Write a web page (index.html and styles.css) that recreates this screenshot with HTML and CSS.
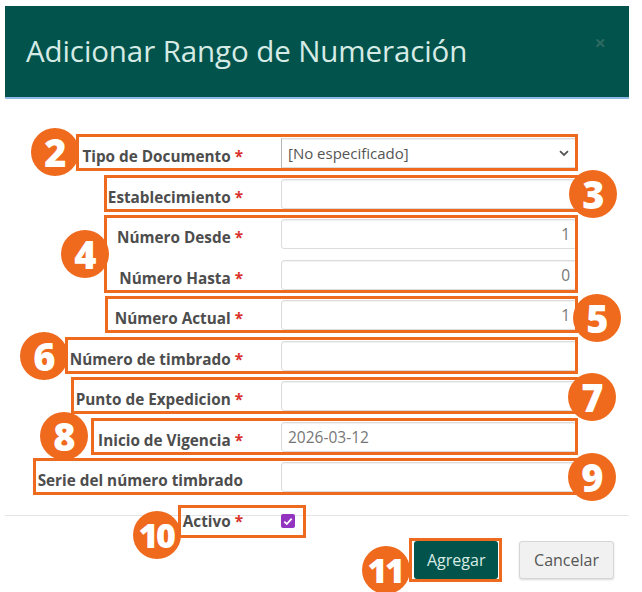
FILE: index.html
```html
<!DOCTYPE html>
<html lang="es">
<head>
<meta charset="utf-8">
<title>Adicionar Rango de Numeración</title>
<link rel="stylesheet" href="styles.css">
</head>
<body>
<div class="modal">
  <div class="modal-header">
    <h4 class="modal-title">Adicionar Rango de Numeración</h4>
    <span class="close">×</span>
  </div>
  <div class="modal-body">
    <div class="row">
      <label class="lbl">Tipo de Documento <span class="req">*</span></label>
      <div class="field select">[No especificado]
        <svg class="chev" width="10" height="7" viewBox="0 0 10 7"><path d="M1 1.2 L5 5 L9 1.2" fill="none" stroke="#555" stroke-width="1.8"/></svg>
      </div>
      <span class="mark m2"></span>
      <span class="badge b2">2</span>
    </div>
    <div class="row">
      <label class="lbl">Establecimiento <span class="req">*</span></label>
      <div class="field"></div>
      <span class="mark m3"></span>
      <span class="badge b3">3</span>
    </div>
    <div class="group">
      <div class="row">
        <label class="lbl">Número Desde <span class="req">*</span></label>
        <div class="field num">1</div>
      </div>
      <div class="row">
        <label class="lbl">Número Hasta <span class="req">*</span></label>
        <div class="field num">0</div>
      </div>
      <span class="mark m4"></span>
      <span class="badge b4">4</span>
    </div>
    <div class="row">
      <label class="lbl">Número Actual <span class="req">*</span></label>
      <div class="field num">1</div>
      <span class="mark m5"></span>
      <span class="badge b5">5</span>
    </div>
    <div class="row">
      <label class="lbl">Número de timbrado <span class="req">*</span></label>
      <div class="field"></div>
      <span class="mark m6"></span>
      <span class="badge b6">6</span>
    </div>
    <div class="row">
      <label class="lbl">Punto de Expedicion <span class="req">*</span></label>
      <div class="field"></div>
      <span class="mark m7"></span>
      <span class="badge b7">7</span>
    </div>
    <div class="row">
      <label class="lbl">Inicio de Vigencia <span class="req">*</span></label>
      <div class="field date">2026-03-12</div>
      <span class="mark m8"></span>
      <span class="badge b8">8</span>
    </div>
    <div class="row">
      <label class="lbl">Serie del número timbrado</label>
      <div class="field"></div>
      <span class="mark m9"></span>
      <span class="badge b9">9</span>
    </div>
  </div>
  <div class="modal-footer">
    <div class="row check-row">
      <label class="lbl">Activo <span class="req">*</span></label>
      <div class="check-cell">
        <span class="checkbox">
          <svg width="10" height="9" viewBox="0 0 10 9"><path d="M1.3 4.6 L3.8 7 L8.7 1.6" fill="none" stroke="#fff" stroke-width="1.8"/></svg>
        </span>
      </div>
      <span class="mark m10"></span>
      <span class="badge b10 wide">10</span>
    </div>
    <div class="buttons">
      <div class="btn-wrap">
        <button class="btn btn-primary">Agregar</button>
        <span class="mark m11"></span>
        <span class="badge b11 wide">11</span>
      </div>
      <button class="btn btn-default">Cancelar</button>
    </div>
  </div>
</div>
</body>
</html>
```
FILE: styles.css
```css
* { box-sizing: border-box; }
html, body { margin: 0; padding: 0; background: #fff; }
body {
  font-family: "Open Sans", "Noto Sans", sans-serif;
  color: #555;
  width: 642px;
  height: 592px;
  overflow: hidden;
}
.modal {
  margin: 6px 0 0 5px;
  width: 624px;
}
.modal-header {
  height: 93px;
  background: #02534b;
  border-bottom: 2px solid #8dbbe6;
  display: flex;
  align-items: center;
  justify-content: space-between;
  padding: 0 23px 0 21px;
}
.modal-title {
  margin: 0;
  font-size: 29.5px;
  font-weight: 400;
  color: #d6ebe5;
  line-height: 1.1;
  letter-spacing: -0.1px;
}
.close {
  font-size: 20px;
  font-weight: 700;
  color: #2c6961;
  line-height: 1;
  margin-top: -18px;
}
.modal-body {
  padding: 39px 0 23px 0;
  display: flex;
  flex-direction: column;
  row-gap: 10.5px;
}
.group {
  position: relative;
  width: 572px;
  display: flex;
  flex-direction: column;
  row-gap: 10.5px;
}
.row {
  position: relative;
  width: 572px;
  display: grid;
  grid-template-columns: 238px 296px;
  column-gap: 38px;
  align-items: center;
  height: 30px;
}
.lbl {
  text-align: right;
  font-weight: 700;
  font-size: 15.3px;
  color: #4d4d4d;
  padding-top: 6px;
  white-space: nowrap;
}
.req { color: #d9302c; }
.field {
  height: 30px;
  border: 1px solid #dcdcdc;
  border-radius: 3px;
  box-shadow: inset 0 1px 1px rgba(0,0,0,.06);
  background: #fff;
  font-size: 15.5px;
  line-height: 28px;
  padding: 0 6px;
  color: #555;
}
.select {
  position: relative;
  border-left-color: #b5b5b5;
  border-radius: 0;
  font-size: 15px;
}
.chev { position: absolute; right: 7px; top: 11px; }
.num { text-align: right; color: #777; }
.date { color: #777; }

.mark {
  position: absolute;
  top: -4px;
  bottom: -3px;
  right: -1px;
  border: 3px solid #ed6a1f;
  pointer-events: none;
}
.m2 { left: 71px; }
.m3 { left: 99px; }
.m4 { left: 99px; }
.m5 { left: 100px; }
.m6 { left: 60px; }
.m7 { left: 66px; }
.m8 { left: 86px; }
.m9 { left: 28px; }

.badge {
  position: absolute;
  width: 48px;
  height: 48px;
  margin: -24px 0 0 -24px;
  border-radius: 50%;
  background: #ef6a1d;
  color: #fff;
  font-weight: 800;
  font-size: 38px;
  line-height: 48px;
  text-align: center;
  z-index: 2;
  letter-spacing: -1px;
}
.badge.wide {
  font-size: 34px;
  letter-spacing: -2.5px;
  text-indent: -2px;
}
.b2 { left: 50px; top: 14px; }
.b3 { left: 588px; top: 15.5px; }
.b4 { left: 80px; top: 35px; }
.b5 { left: 592px; top: 18px; }
.b6 { left: 39px; top: 15.5px; }
.b7 { left: 587px; top: 16px; }
.b8 { left: 59px; top: 14.5px; }
.b9 { left: 587px; top: 15px; }

.modal-footer {
  border-top: 1px solid #e5e5e5;
}
.check-row {
  height: 18px;
  margin-top: -4px;
}
.check-row .lbl { padding-top: 0; line-height: 18px; }
.check-cell { display: flex; align-items: center; }
.checkbox {
  width: 14px;
  height: 14px;
  border-radius: 2px;
  background: #9234c0;
  display: flex;
  align-items: center;
  justify-content: center;
}
.m10 { top: -7px; bottom: -8px; left: 173px; right: auto; width: 128px; }
.b10 { left: 152px; top: 23px; }

.buttons {
  display: flex;
  justify-content: flex-end;
  gap: 21px;
  padding: 11px 15px 0 0;
}
.btn-wrap { position: relative; display: flex; }
.btn {
  font-family: inherit;
  font-size: 16px;
  height: 38px;
  line-height: 22px;
  border-radius: 3px;
  padding: 0 12px;
  border: 1px solid transparent;
}
.btn-primary {
  width: 84px;
  background: #02534b;
  color: #d7ebe5;
}
.btn-default {
  width: 95px;
  background: #f1f1f1;
  border-color: #d6d6d6;
  color: #555;
  box-shadow: 0 1px 2px rgba(0,0,0,.15);
}
.m11 { top: -3px; bottom: -3px; left: -5px; right: -4px; }
.b11 { left: -28px; top: 29px; }
```
